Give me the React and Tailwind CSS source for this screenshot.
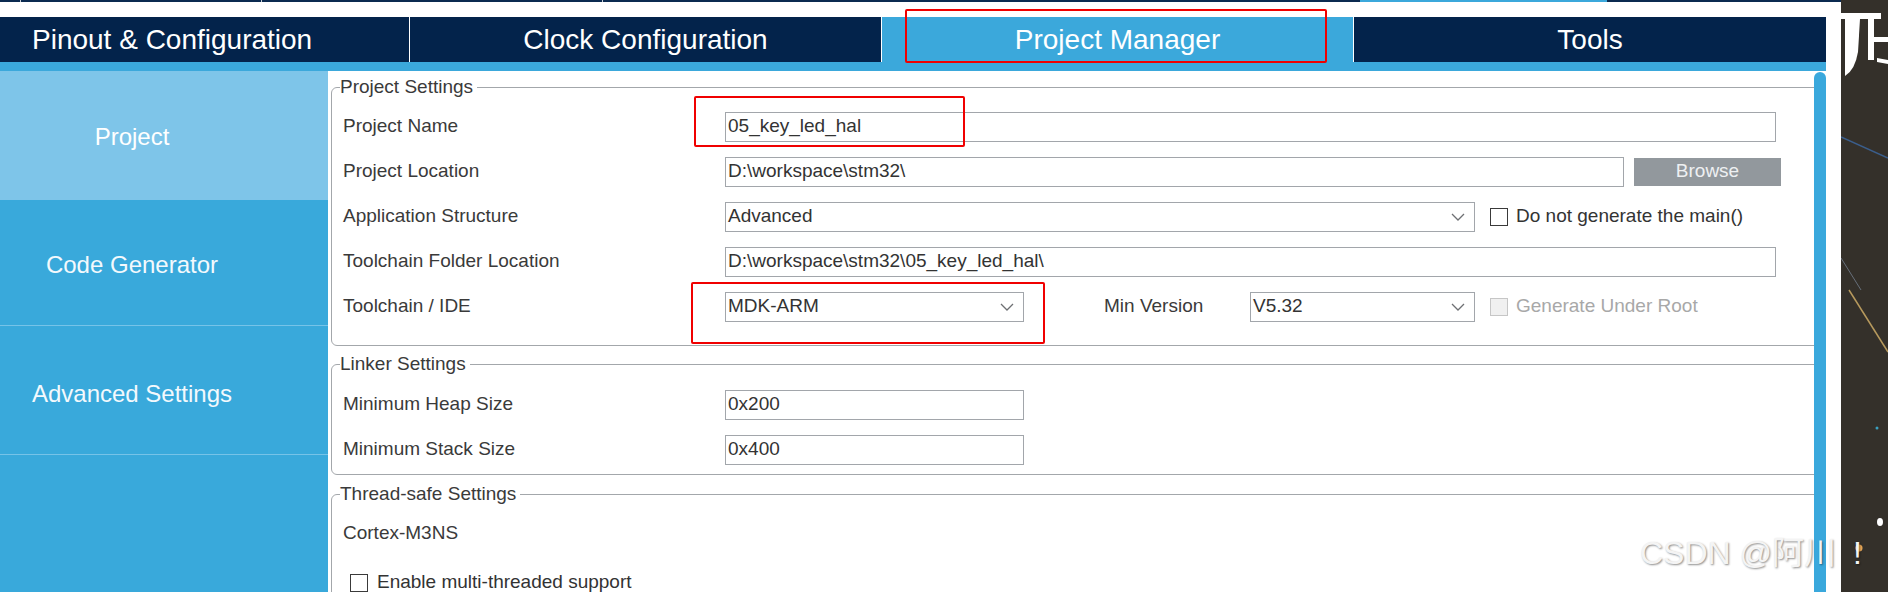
import React from 'react';

const Chevron = () => (
  <svg width="14" height="8" viewBox="0 0 14 8" className="shrink-0">
    <polyline points="1,1 7,7 13,1" fill="none" stroke="#6e7073" strokeWidth="1.3" />
  </svg>
);

const Box = ({ w, children, className = '' }) => (
  <div className={`h-[30px] border border-[#a2a6ab] bg-white flex items-center px-[2px] text-[#333] ${w} ${className}`}>
    {children}
  </div>
);

const Select = ({ w, value }) => (
  <div className={`h-[30px] border border-[#a2a6ab] bg-white flex items-center justify-between pl-[2px] pr-[9px] text-[#333] ${w}`}>
    <span>{value}</span>
    <Chevron />
  </div>
);

const Check = ({ label, disabled }) => (
  <div className="flex items-center ml-[15px]">
    <div className={`w-[18px] h-[18px] border-[1.5px] ${disabled ? 'border-[#c6c6c6] bg-[#f0f0f0]' : 'border-[#3a3a3a] bg-white'}`}></div>
    <span className={`ml-[8px] ${disabled ? 'text-[#a8a8a8]' : 'text-[#333]'}`}>{label}</span>
  </div>
);

const Row = ({ label, children }) => (
  <div className="h-[45px] flex items-center">
    <div className="w-[385px] pl-[3px] shrink-0">{label}</div>
    {children}
  </div>
);

const Group = ({ title, className = '', bodyClass = '', children }) => (
  <fieldset className={`w-[1520px] border border-[#a3a7ab] rounded-[6px] pl-[8px] ${className}`}>
    <legend className="h-[18px] leading-[18px] pr-[4px] text-[19px] text-[#3a3a3a]">{title}</legend>
    <div className={bodyClass}>{children}</div>
  </fieldset>
);

export default function App() {
  return (
    <div className="relative w-[1888px] h-[592px] flex overflow-hidden bg-white font-['Liberation_Sans',Arial,sans-serif] text-[19px] text-[#3a3a3a]">
      <div className="w-[1841px] h-full flex flex-col bg-white">
        {/* thin strip from the window behind */}
        <div className="h-[17px] shrink-0">
          <div className="h-[2px] flex">
            <div className="w-[20px] bg-[#0b2a50]"></div>
            <div className="w-px bg-[#c7ced6]"></div>
            <div className="w-[240px] bg-[#0b2a50]"></div>
            <div className="w-px bg-[#c7ced6]"></div>
            <div className="w-[340px] bg-[#0b2a50]"></div>
            <div className="w-px bg-[#c7ced6]"></div>
            <div className="w-[757px] bg-[#0b2a50]"></div>
            <div className="w-[247px] bg-[#3ba8db]"></div>
            <div className="flex-1 bg-[#0b2a50]"></div>
          </div>
        </div>

        {/* main tabs */}
        <div className="h-[45px] w-[1826px] shrink-0 flex gap-px text-[28px] text-white">
          <div className="w-[409px] bg-[#03234b] flex items-center pl-[32px]">Pinout &amp; Configuration</div>
          <div className="w-[471px] bg-[#03234b] flex items-center justify-center">Clock Configuration</div>
          <div className="w-[471px] bg-[#3ba8db] flex items-center justify-center">Project Manager</div>
          <div className="flex-1 bg-[#03234b] flex items-center justify-center">Tools</div>
        </div>
        <div className="h-[9px] w-[1826px] shrink-0 bg-[#3ba8db]"></div>

        <div className="flex flex-1 min-h-0 w-[1826px]">
          {/* side menu */}
          <div className="w-[328px] shrink-0 bg-[#39a9db] flex flex-col text-[24px] text-[#f3f9fd]">
            <div className="h-[129px] bg-[#7ec5e9] flex items-center justify-center pr-[64px] pt-[3px] text-white">Project</div>
            <div className="h-[126px] border-b border-[#76c3e8] flex items-center justify-center pr-[64px] pt-[5px]">Code Generator</div>
            <div className="h-[129px] border-b border-[#76c3e8] flex items-center justify-center pr-[64px] pt-[8px]">Advanced Settings</div>
          </div>

          {/* settings */}
          <div className="flex-1 min-w-0 overflow-hidden pl-[3px]">
            <Group title="Project Settings" className="mt-[7px] pb-[16px]" bodyClass="pt-[8px]">
              <Row label="Project Name">
                <Box w="w-[1051px]">05_key_led_hal</Box>
              </Row>
              <Row label="Project Location">
                <Box w="w-[899px]">D:\workspace\stm32\</Box>
                <div className="ml-[10px] w-[147px] h-[28px] bg-[#92989d] flex items-center justify-center text-[#eef0f2]">Browse</div>
              </Row>
              <Row label="Application Structure">
                <Select w="w-[750px]" value="Advanced" />
                <Check label="Do not generate the main()" />
              </Row>
              <Row label="Toolchain Folder Location">
                <Box w="w-[1051px]">D:\workspace\stm32\05_key_led_hal\</Box>
              </Row>
              <Row label="Toolchain / IDE">
                <Select w="w-[299px]" value="MDK-ARM" />
                <div className="ml-[80px] w-[146px]">Min Version</div>
                <Select w="w-[225px]" value="V5.32" />
                <Check label="Generate Under Root" disabled />
              </Row>
            </Group>

            <Group title="Linker Settings" className="mt-[9px] pb-[2px]" bodyClass="pt-[9px]">
              <Row label="Minimum Heap Size">
                <Box w="w-[299px]" className="h-[29px]">0x200</Box>
              </Row>
              <Row label="Minimum Stack Size">
                <Box w="w-[299px]" className="h-[29px]">0x400</Box>
              </Row>
            </Group>

            <Group title="Thread-safe Settings" className="mt-[10px] pb-[20px]" bodyClass="pt-[8px]">
              <div className="h-[45px] flex items-center pl-[3px]">Cortex-M3NS</div>
              <div className="h-[45px] mt-[4px] flex items-center pl-[10px]">
                <div className="w-[18px] h-[18px] border-[1.5px] border-[#3a3a3a] bg-white"></div>
                <span className="ml-[9px] text-[#333]">Enable multi-threaded support</span>
              </div>
            </Group>
          </div>

          {/* scrollbar */}
          <div className="w-[12px] shrink-0 mt-px rounded-t-full bg-[#3aa8dc]"></div>
        </div>
      </div>

      {/* desktop behind the window */}
      <div className="flex-1 h-full bg-[#34302b]">
        <svg width="47" height="592" viewBox="0 0 47 592" className="block">
          <rect x="0" y="0" width="47" height="592" fill="#34302a" />
          <rect x="0" y="13" width="40" height="6" fill="#ffffff" />
          <path d="M4 19 L19 19 L17 52 Q14 70 4 76 L4 19 Z" fill="#ffffff" />
          <path d="M27 19 L33 19 L33 60 L27 60 Z" fill="#ffffff" />
          <path d="M33 37 L47 37 L47 42 L33 42 Z" fill="#ffffff" />
          <path d="M36 58 L47 60 L47 64 L36 62 Z" fill="#ffffff" />
          <line x1="0" y1="137" x2="47" y2="158" stroke="#3b5e8c" strokeWidth="1.5" />
          <line x1="8" y1="290" x2="47" y2="352" stroke="#d8b46a" strokeWidth="1.5" opacity="0.8" />
          <line x1="0" y1="258" x2="20" y2="290" stroke="#8a9ab0" strokeWidth="1" opacity="0.6" />
          <circle cx="36" cy="428" r="1.5" fill="#3aa0c0" />
          <ellipse cx="39" cy="522" rx="3" ry="4" fill="#ffffff" />
          <circle cx="18" cy="548" r="3.5" fill="#e8a858" />
        </svg>
      </div>

      {/* annotation frames */}
      <div className="absolute left-[905px] top-[9px] w-[422px] h-[54px] border-2 border-[#f00000] rounded-[2px]"></div>
      <div className="absolute left-[694px] top-[96px] w-[271px] h-[51px] border-2 border-[#f00000] rounded-[2px]"></div>
      <div className="absolute left-[691px] top-[282px] w-[354px] h-[62px] border-2 border-[#f00000] rounded-[2px]"></div>

      {/* watermark */}
      <div className="absolute left-[1640px] top-[537px] text-[32px] leading-none text-[#f4f4f4] [text-shadow:1px_1px_2px_rgba(0,0,0,0.45)] font-['Liberation_Sans','Noto_Sans_CJK_SC',sans-serif]">
        CSDN @阿川 <span className="ml-[8px]">!</span>
      </div>
    </div>
  );
}
